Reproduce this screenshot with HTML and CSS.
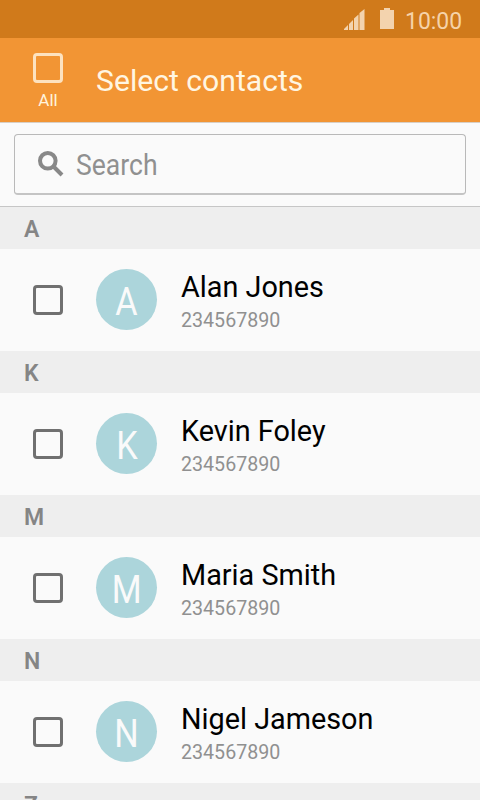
FILE: index.html
```html
<!DOCTYPE html>
<html lang="en">
<head>
<meta charset="utf-8">
<title>Select contacts</title>
<link rel="stylesheet" href="styles.css">
</head>
<body>
<div class="screen">
  <div class="status">
    <svg class="signal" width="22" height="21" viewBox="0 0 22 21"><path d="M0 21v-1l4-4v5zM5 21v-6l4-4v10zM10 21V9.500l4.500-4V21zM15.500 21V4L20.500 0v21z"/></svg>
    <svg class="battery" width="14" height="21" viewBox="0 0 14 21"><path d="M0 2h4V0h6v2h4v19H0z"/></svg>
    <span class="clock">10:00</span>
  </div>
  <header class="bar">
    <div class="all"><span class="box box-light"></span><span class="all-label">All</span></div>
    <h1 class="title">Select contacts</h1>
  </header>
  <div class="search-area">
    <div class="search">
      <svg class="glass" width="26" height="26" viewBox="0 0 26 26"><circle cx="9.800" cy="9.800" r="7.800"/><path d="M15.500 15.500L24 24"/></svg>
      <span class="hint">Search</span>
    </div>
  </div>
  <main class="list">
    <h2 class="letter">A</h2>
    <div class="row"><span class="box"></span><span class="avatar"><span class="initial">A</span></span><div class="info"><span class="name">Alan Jones</span><span class="phone">234567890</span></div></div>
    <h2 class="letter">K</h2>
    <div class="row"><span class="box"></span><span class="avatar"><span class="initial">K</span></span><div class="info"><span class="name">Kevin Foley</span><span class="phone">234567890</span></div></div>
    <h2 class="letter">M</h2>
    <div class="row"><span class="box"></span><span class="avatar"><span class="initial">M</span></span><div class="info"><span class="name">Maria Smith</span><span class="phone">234567890</span></div></div>
    <h2 class="letter">N</h2>
    <div class="row"><span class="box"></span><span class="avatar"><span class="initial">N</span></span><div class="info"><span class="name">Nigel Jameson</span><span class="phone">234567890</span></div></div>
    <h2 class="letter">Z</h2>
  </main>
</div>
</body>
</html>
```

FILE: styles.css
```css
* { box-sizing: border-box; }
body { margin: 0; font-family: Roboto, sans-serif; background: #fafafa; }
.screen { width: 480px; height: 800px; overflow: hidden; }
.status { height: 38px; background: #d07a1b; display: flex; align-items: flex-start; padding-left: 344px; }
.status svg { fill: #f3d3ae; flex: none; }
.signal { margin-top: 9px; }
.battery { margin: 8px 0 0 14px; }
.clock { margin: 7px 0 0 11px; font-size: 24px; line-height: 28px; color: #f6d3a9; transform: scaleX(.955); transform-origin: left; }
.bar { height: 85px; background: #f29534; border-bottom: 1px solid #d8cfc5; display: flex; }
.all { width: 96px; padding-top: 15px; display: flex; flex-direction: column; align-items: center; }
.all-label { font-size: 17px; line-height: 20px; margin-top: 7px; color: #fff3dc; }
.box { width: 30px; height: 30px; flex: none; border: 3px solid #707070; border-radius: 4px; }
.box-light { border-color: #fde2bf; }
.title { margin: 25px 0 0; font-size: 30px; line-height: 36px; font-weight: 400; color: #fff6e2; white-space: nowrap; transform: scaleX(1.005); transform-origin: left; }
.search-area { height: 84px; padding: 11px 14px 0; border-bottom: 1px solid #c6c6c6; }
.search { height: 61px; border: 1px solid #b9b9b9; border-bottom: 2px solid #c4c4c4; border-radius: 4px; display: flex; padding-left: 23px; }
.glass { margin-top: 16px; fill: none; stroke: #888; stroke-width: 4; }
.hint { margin: 13px 0 0 12px; font-size: 29px; line-height: 34px; color: #909090; transform: scaleX(.915); transform-origin: left; }
.letter { margin: 0; height: 42px; padding: 2px 0 0 24px; background: #eee; color: #858585; font-size: 23px; line-height: 42px; font-weight: 600; }
.row { height: 102px; padding-left: 33px; display: flex; align-items: center; }
.avatar { width: 61px; height: 61px; margin: 0 24px 1px 33px; border-radius: 50%; background: #acd5db; color: #fafafa; font-size: 38px; line-height: 66px; text-align: center; flex: none; }
.initial { display: inline-block; transform: scaleX(.9); }
.info { display: flex; flex-direction: column; align-items: flex-start; padding-top: 3px; }
.name { font-size: 30px; line-height: 34px; color: #000; white-space: nowrap; transform: scaleX(.96); transform-origin: left; }
.phone { font-size: 21px; line-height: 26px; margin-top: 3px; color: #909090; transform: scaleX(.935); transform-origin: left; }
```
